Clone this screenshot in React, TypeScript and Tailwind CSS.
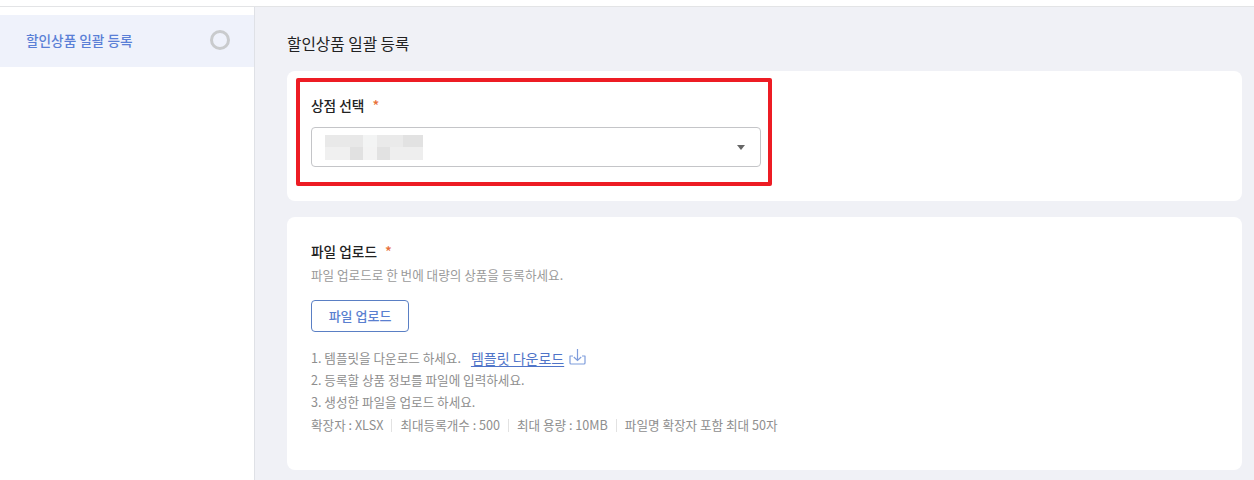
import React from 'react';

const font = '[font-family:"Noto_Sans_CJK_KR","Noto_Sans",sans-serif]';

// mosaic that hides the store name, 2 rows of grey blocks
const mosaic = ['#e9e9e9', '#e8e8e8', '#f3f4f4', '#eaeaea', '#eaeaea', '#e2e2e2', '#f0f0f0', '#e1e1e1', '#f3f3f3', '#e2e2e2', '#eeeeee', '#eeeeee'];

const Mosaic = () => (
  <div className="w-[98px] h-[25px] grid grid-cols-[25px_13px_14px_13px_13px_20px] grid-rows-[12px_13px]">
    {mosaic.map((c, i) => (
      <div key={i} style={{ backgroundColor: c }} />
    ))}
  </div>
);

const Required = () => <span className="text-[#e8703a] text-[14px] leading-none ml-2 font-medium">*</span>;

const DownloadIcon = () => (
  <svg width="17" height="17" viewBox="0 0 17 17" fill="none" stroke="#7f9ddc" strokeWidth="1.2" className="ml-[5px] -mt-[3px]">
    <path d="M4 8H1v7a1 1 0 0 0 1 1h13a1 1 0 0 0 1-1V8h-3" strokeLinejoin="round" />
    <path d="M8.5 1v11.5M4.8 9l3.7 3.5L12.2 9" />
  </svg>
);

const Divider = () => <span className="w-px h-[13px] bg-[#e2e2e2] mx-2" />;

export default function App() {
  return (
    <div className={`w-[1254px] h-[480px] overflow-hidden flex flex-col bg-white ${font}`}>
      <div className="h-[7px] shrink-0 border-b border-[#e3e4e6]" />
      <div className="flex flex-1 min-h-0">
        <aside className="w-[255px] shrink-0 bg-white border-r border-[#dfe1e6] pt-2">
          <div className="h-[52px] bg-[#eff2fb] flex items-center justify-between pl-[26px] pr-6 pb-[2px]">
            <span className="text-[13.65px] font-medium text-[#5a7fd6]">할인상품 일괄 등록</span>
            <span className="w-5 h-5 rounded-full border-[3px] border-[#c9cbcd]" />
          </div>
        </aside>
        <main className="flex-1 bg-[#f0f1f6] pl-8 pr-3 pt-[26px]">
          <h1 className="text-[15.7px] leading-[22px] font-normal text-[#222] mb-4">할인상품 일괄 등록</h1>
          <section className="relative h-[130px] bg-white rounded-lg px-6 pt-6 mb-4">
            <div className="flex items-center h-[20px] text-[13.7px] font-medium text-[#222]">
              상점 선택
              <Required />
            </div>
            <div className="mt-[12px] w-[450px] h-[40px] border border-[#c4c5c8] rounded-[4px] flex items-center justify-between pl-[13px] pr-[15px]">
              <Mosaic />
              <span className="w-0 h-0 border-x-[4.5px] border-x-transparent border-t-[5px] border-t-[#666]" />
            </div>
            <div className="absolute left-[9px] top-[7px] w-[476px] h-[108px] border-4 border-[#ed1c24] rounded-[2px]" />
          </section>
          <section className="h-[253px] bg-white rounded-lg px-6 pt-6">
            <div className="flex items-center h-[20px] text-[13.7px] font-medium text-[#222]">
              파일 업로드
              <Required />
            </div>
            <p className="text-[12.6px] leading-[18px] mt-[5px] text-[#9a9a9a]">파일 업로드로 한 번에 대량의 상품을 등록하세요.</p>
            <button
              type="button"
              className="mt-[16px] w-[98px] h-[32px] border border-[#5a7fc4] rounded-[4px] text-[13px] font-medium text-[#5a7fd0] bg-white"
            >
              파일 업로드
            </button>
            <ul className="mt-[15px] text-[12.6px] leading-[22px] text-[#8e8e8e]">
              <li className="flex items-center">
                1. 템플릿을 다운로드 하세요.
                <a className="ml-[10px] text-[14px] text-[#4f74c8] underline underline-offset-2">템플릿 다운로드</a>
                <DownloadIcon />
              </li>
              <li>2. 등록할 상품 정보를 파일에 입력하세요.</li>
              <li>3. 생성한 파일을 업로드 하세요.</li>
              <li className="flex items-center mt-px">
                확장자 : XLSX
                <Divider />
                최대등록개수 : 500
                <Divider />
                최대 용량 : 10MB
                <Divider />
                파일명 확장자 포함 최대 50자
              </li>
            </ul>
          </section>
        </main>
      </div>
    </div>
  );
}
